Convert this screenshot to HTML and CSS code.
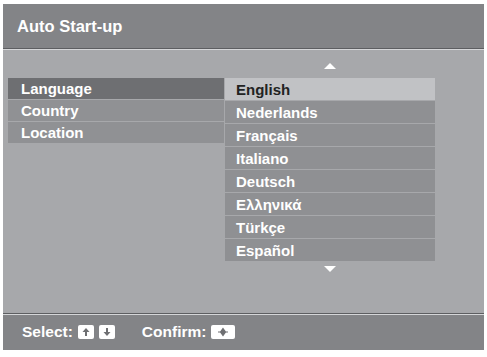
FILE: index.html
```html
<!DOCTYPE html>
<html lang="en">
<head>
  <meta charset="UTF-8" />
  <title>Auto Start-up</title>
  <link rel="stylesheet" href="styles.css">
</head>
<body>
  <div class="screen">
    <header class="title-bar">Auto Start-up</header>

    <div class="content">
      <div class="menu">
        <div class="menu-item active">Language</div>
        <div class="menu-item">Country</div>
        <div class="menu-item">Location</div>
      </div>

      <div class="options">
        <div class="arrow up"></div>
        <div class="option active">English</div>
        <div class="option">Nederlands</div>
        <div class="option">Français</div>
        <div class="option">Italiano</div>
        <div class="option">Deutsch</div>
        <div class="option">Ελληνικά</div>
        <div class="option">Türkçe</div>
        <div class="option">Español</div>
        <div class="arrow down"></div>
      </div>
    </div>

    <footer class="help-bar">
      <span>Select:</span>
      <span class="key">
        <svg width="10" height="10" viewBox="0 0 10 10"><path d="M5 1 L1.5 5 H4 V9 H6 V5 H8.5 Z" fill="#6e6f72"/></svg>
      </span>
      <span class="key">
        <svg width="10" height="10" viewBox="0 0 10 10"><path d="M5 9 L1.5 5 H4 V1 H6 V5 H8.5 Z" fill="#6e6f72"/></svg>
      </span>
      <span class="confirm">Confirm:</span>
      <span class="key wide">
        <svg width="16" height="10" viewBox="0 0 16 10"><path d="M8 1.5 L10.5 5 L8 8.5 L5.5 5 Z M3 5 H13" stroke="#6e6f72" stroke-width="1.2" fill="#6e6f72"/></svg>
      </span>
    </footer>
  </div>
</body>
</html>
```

FILE: styles.css
```css
body {
  margin: 0;
  background: #fff;
  font-family: 'Liberation Sans', Arial, sans-serif;
  font-weight: bold;
}

.screen {
  margin: 4px 3px 0;
  width: 481px;
  height: 346px;
  display: flex;
  flex-direction: column;
  background: #a7a8ab;
}

.title-bar {
  height: 44px;
  padding-left: 14px;
  display: flex;
  align-items: center;
  color: #fff;
  font-size: 16.5px;
  background: #838487;
  border-bottom: 1px solid #5d5e61;
  box-shadow: 0 1px 0 #d5d6d8;
}

.content {
  flex: 1;
  display: flex;
  padding: 14px 0 0 5px;
}

.menu {
  width: 216px;
  margin-top: 15px;
}

.menu-item {
  height: 21px;
  margin-bottom: 1px;
  padding-left: 13px;
  display: flex;
  align-items: center;
  color: #fff;
  font-size: 15px;
  background: #909194;
}

.menu-item.active {
  background: #6e6f72;
}

.options {
  width: 210px;
  margin-left: 1px;
  display: flex;
  flex-direction: column;
}

.option {
  height: 22px;
  margin-bottom: 1px;
  padding-left: 11px;
  display: flex;
  align-items: center;
  color: #fff;
  font-size: 15px;
  background: #8f9093;
}

.option.active {
  color: #222;
  background: #c1c2c5;
}

.arrow {
  align-self: center;
  width: 0;
  height: 0;
  border-left: 6px solid transparent;
  border-right: 6px solid transparent;
}

.arrow.up {
  border-bottom: 6px solid #fff;
  margin: 0 0 9px 0;
}

.arrow.down {
  border-top: 6px solid #fff;
  margin-top: 4px;
}

.help-bar {
  height: 36px;
  padding-left: 19px;
  display: flex;
  align-items: center;
  gap: 5px;
  color: #fff;
  font-size: 15.5px;
  background: #838487;
  border-top: 1px solid #5d5e61;
  box-shadow: inset 0 1px 0 #d5d6d8;
}

.key {
  width: 16px;
  height: 14px;
  display: flex;
  align-items: center;
  justify-content: center;
  background: #fff;
  border-radius: 2px;
}

.key.wide {
  width: 24px;
}

.confirm {
  margin-left: 22px;
}
```
